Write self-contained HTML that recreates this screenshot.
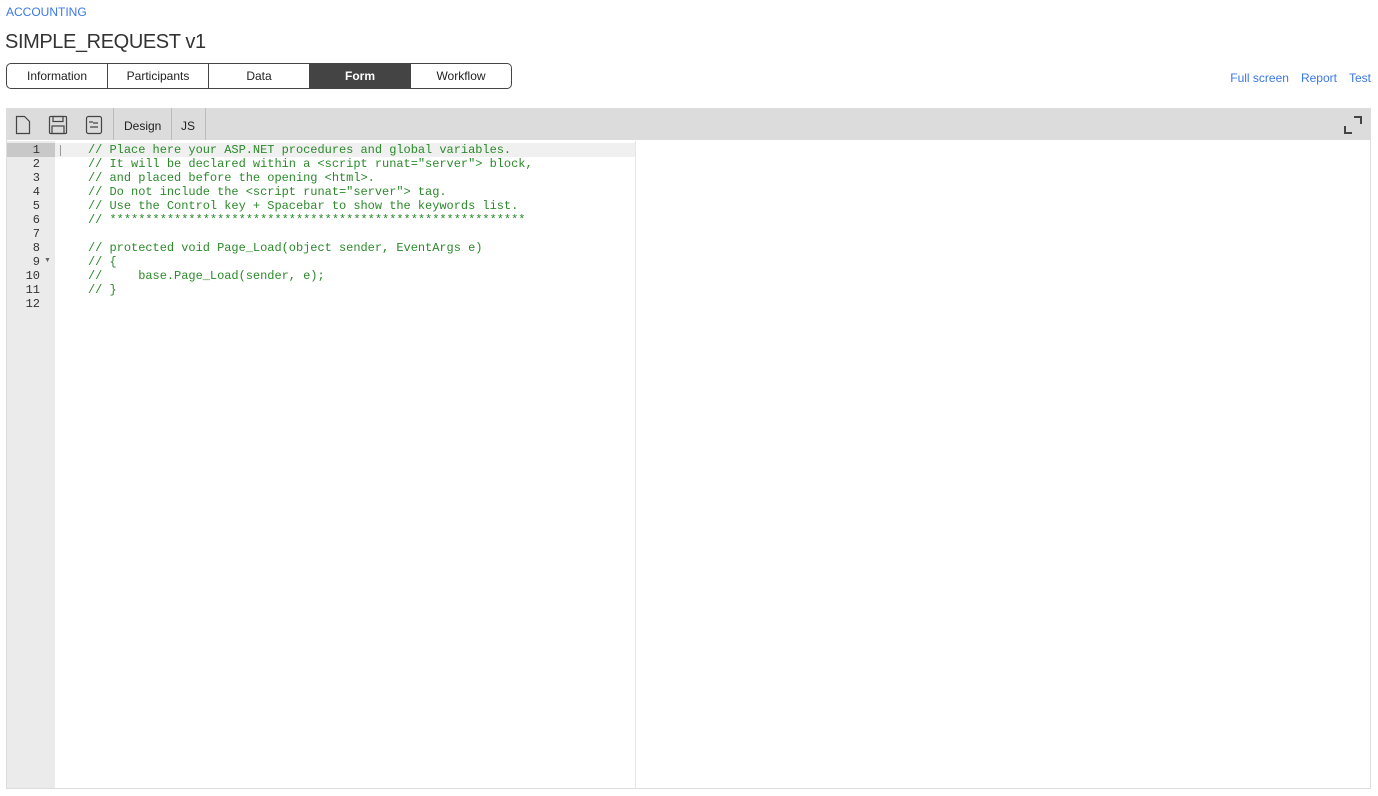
<!DOCTYPE html>
<html><head><style>
body{margin:0;width:1378px;height:796px;background:#fff;font-family:"Liberation Sans",sans-serif;position:relative;overflow:hidden}
.a{position:absolute}
.crumb{left:6px;top:5px;font-size:12px;color:#3a78e7}
h1{position:absolute;left:5px;top:31px;margin:0;font-size:20px;font-weight:normal;color:#333;letter-spacing:-0.4px}
.tabs{left:6px;top:63px;width:504px;height:24px;border:1px solid #444;border-radius:5px;display:flex;overflow:hidden}
.tabs div{flex:1;text-align:center;font-size:12px;line-height:24px;color:#222;border-right:1px solid #444}
.tabs div:last-child{border-right:none}
.tabs .on{background:#444;color:#fff;font-weight:bold}
.links{top:71px;right:7px;font-size:12px;color:#3a78e7}
.links span{margin-left:12px}
.ed{left:6px;top:108px;width:1363px;height:680px;border:1px solid #ddd;border-top:none}
.tb{left:0;top:0;width:1364px;height:32px;background:#dcdcdc}
.gut{left:0;top:33px;width:48px;height:647px;background:#ebebeb}
.ln{position:absolute;left:0;width:34px;text-align:right;font:12px/14px "Liberation Mono",monospace;color:#333}
.code{position:absolute;left:81px;top:35px;font:12px/14px "Liberation Mono",monospace;color:#2a8a2a;white-space:pre;letter-spacing:-0.03px}
.sep{position:absolute;top:0;width:1px;height:32px;background:#bbb}
</style></head><body>
<div class="a crumb">ACCOUNTING</div>
<h1>SIMPLE_REQUEST v1</h1>
<div class="a tabs"><div>Information</div><div>Participants</div><div>Data</div><div class="on">Form</div><div>Workflow</div></div>
<div class="a links"><span>Full screen</span><span>Report</span><span>Test</span></div>
<div class="a ed">
 <div class="a tb">
  <svg class="a" style="left:8px;top:7px" width="16" height="20" viewBox="0 0 16 20"><path d="M1.5 1.5h8l5 5v12h-13z" fill="none" stroke="#444" stroke-width="1.2"/></svg>
  <svg class="a" style="left:41px;top:7px" width="20" height="20" viewBox="0 0 20 20"><rect x="1.5" y="1.5" width="17" height="17" rx="1" fill="none" stroke="#444" stroke-width="1.2"/><rect x="5" y="1.5" width="10" height="5" fill="none" stroke="#444" stroke-width="1.2"/><rect x="4" y="11" width="12" height="7.5" fill="none" stroke="#444" stroke-width="1.2"/></svg>
  <svg class="a" style="left:78px;top:7px" width="18" height="20" viewBox="0 0 18 20"><rect x="1.5" y="1.5" width="15" height="17" rx="2" fill="none" stroke="#444" stroke-width="1.2"/><path d="M5 6l0 2M7 6l0 2M8 8h5M5 12h8" stroke="#444" stroke-width="1.2"/></svg>
  <div class="sep" style="left:106px"></div>
  <div class="a" style="left:117px;top:11px;font-size:12px;color:#222">Design</div>
  <div class="sep" style="left:164px"></div>
  <div class="a" style="left:174px;top:11px;font-size:12px;color:#222">JS</div>
  <div class="sep" style="left:198px"></div>
  <svg class="a" style="left:1336px;top:7px" width="20" height="20" viewBox="0 0 20 20"><path d="M11 2h7v7M2 11v7h7" fill="none" stroke="#444" stroke-width="2"/></svg>
 </div>
 <div class="a gut"></div>
 <div class="a" style="left:0;top:35px;width:48px;height:14px;background:#c8c8c8"></div>
 <div class="a" style="left:48px;top:35px;width:580px;height:14px;background:#f0f0f0"></div>
 <div class="a" style="left:53px;top:37px;width:1px;height:11px;background:#999"></div>
 <div class="a" style="left:628px;top:33px;width:1px;height:647px;background:#e6e6e6"></div>
 <div class="a" style="left:-1px;top:35px">
  <div class="ln" style="top:0">1</div><div class="ln" style="top:14px">2</div><div class="ln" style="top:28px">3</div><div class="ln" style="top:42px">4</div><div class="ln" style="top:56px">5</div><div class="ln" style="top:70px">6</div><div class="ln" style="top:84px">7</div><div class="ln" style="top:98px">8</div><div class="ln" style="top:112px">9</div><div class="ln" style="top:126px">10</div><div class="ln" style="top:140px">11</div><div class="ln" style="top:154px">12</div>
  <div class="a" style="left:38px;top:114px;font-size:7px;color:#666">▼</div>
 </div>
 <div class="code">// Place here your ASP.NET procedures and global variables.
// It will be declared within a &lt;script runat="server"&gt; block,
// and placed before the opening &lt;html&gt;.
// Do not include the &lt;script runat="server"&gt; tag.
// Use the Control key + Spacebar to show the keywords list.
// **********************************************************

// protected void Page_Load(object sender, EventArgs e)
// {
//     base.Page_Load(sender, e);
// }
</div>
</div>
</body></html>
